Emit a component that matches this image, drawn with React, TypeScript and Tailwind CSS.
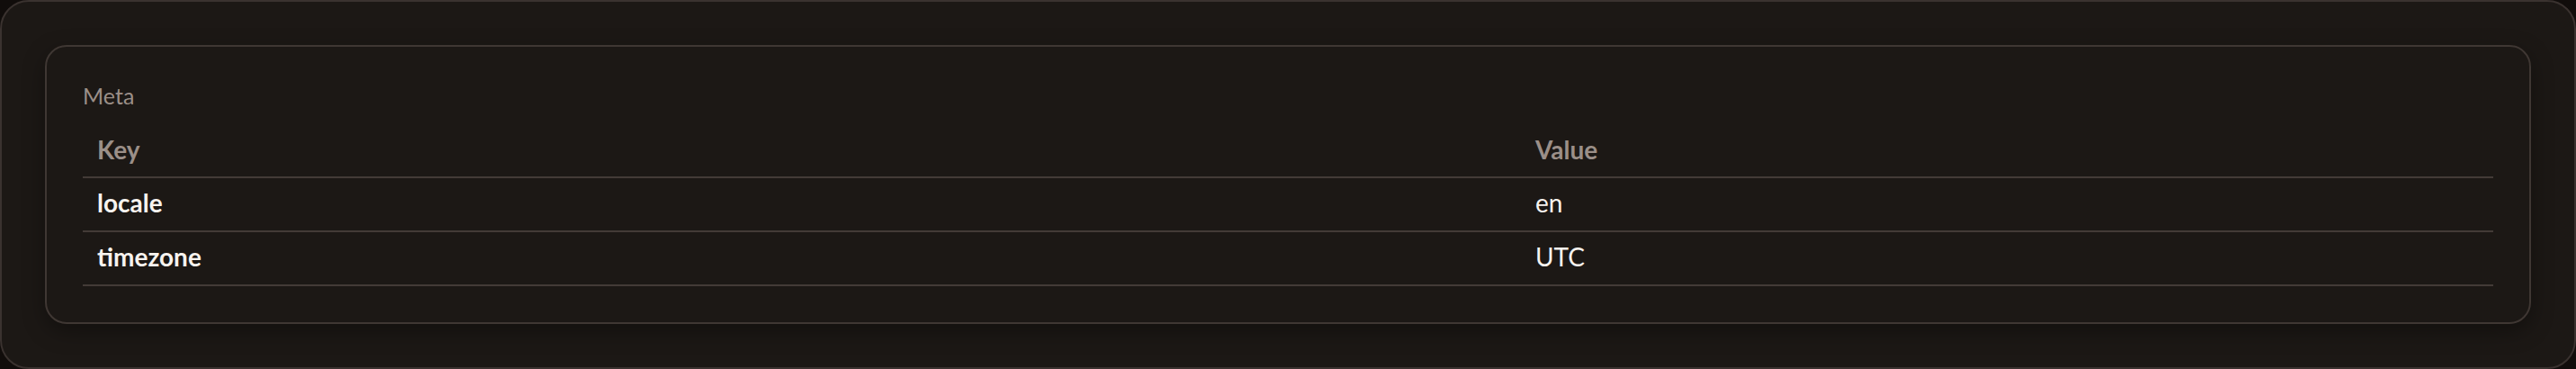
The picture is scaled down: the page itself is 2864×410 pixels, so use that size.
const rows = [
  { key: "locale", value: "en" },
  { key: "timezone", value: "UTC" },
];

const App = () => {
  return (
    <div className="w-[2864px] h-[410px] bg-[#110d0b] font-['Lato',sans-serif]">
      <div className="h-full rounded-[32px] border-2 border-[#3a322f] bg-[#1c1815] p-12">
        <div className="rounded-3xl border-2 border-[#3f3733] bg-[#1c1815] p-10 shadow-[0_8px_24px_rgba(0,0,0,0.35)]">
          <p className="text-[25px] leading-[28px] text-[#9b8f88] mb-5">Meta</p>
          <table className="w-full border-collapse text-[28px]">
            <thead>
              <tr className="border-b-2 border-[#433b37]">
                <th className="w-[1599px] px-4 pt-[6px] pb-[10px] leading-[40px] text-left font-bold text-[#9b8f88]">Key</th>
                <th className="px-4 pt-[6px] pb-[10px] leading-[40px] text-left font-bold text-[#9b8f88]">Value</th>
              </tr>
            </thead>
            <tbody>
              {rows.map((r) => (
                <tr key={r.key} className="border-b-2 border-[#433b37]">
                  <td className="px-4 pt-[6px] pb-[10px] leading-[42px] font-bold text-[#f7f3ef]">{r.key}</td>
                  <td className="px-4 pt-[6px] pb-[10px] leading-[42px] text-[#f7f3ef]">{r.value}</td>
                </tr>
              ))}
            </tbody>
          </table>
        </div>
      </div>
    </div>
  );
};

export default App;
